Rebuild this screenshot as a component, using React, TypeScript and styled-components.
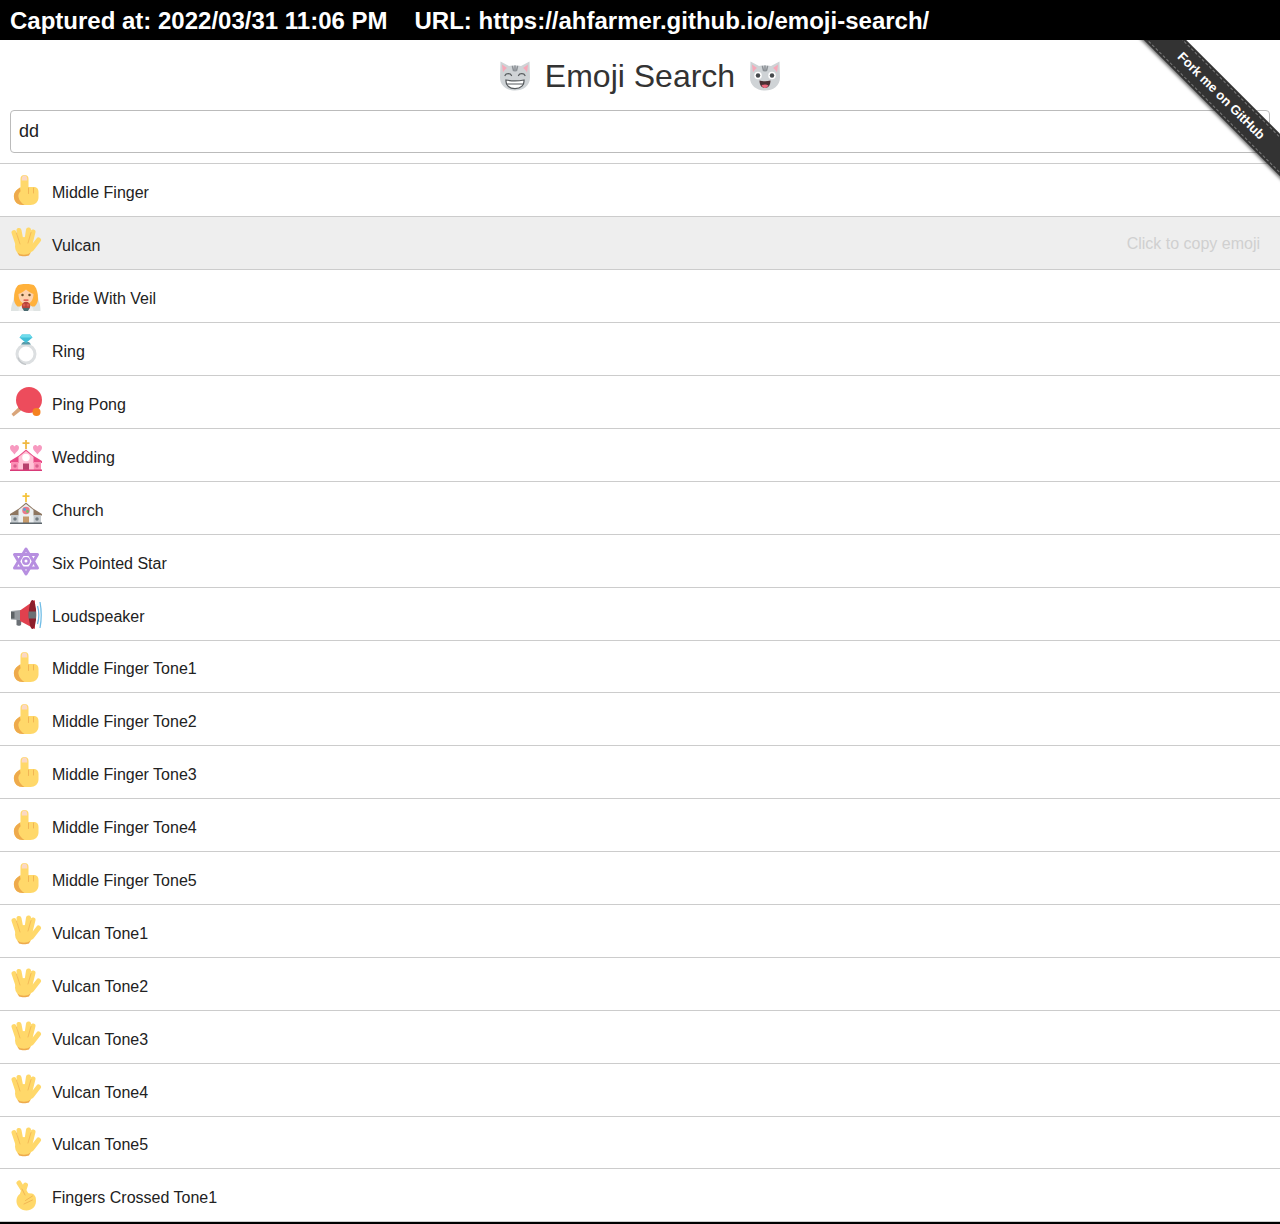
import React from "react";
import styled, { createGlobalStyle } from "styled-components";

const GlobalStyle = createGlobalStyle`
  html, body {
    margin: 0;
    padding: 0;
    background: #fff;
    font-family: "Liberation Sans", Arial, sans-serif;
    color: #333;
  }
`;

// Emoji drawings, all on a 64 box
const Finger = () => (
  <>
    <path d="M8 47c-1-8 3-13 8-17l6-4h28c5 1 7 5 7 10v11c0 9-7 15-16 15H26C15 62 9 56 8 47z" fill="#ffd86a" />
    <path d="M8 47c-1-8 3-13 8-17l4-3 2 7c-4 3-6 8-5 12 1 7 6 12 12 16h-3C15 62 9 56 8 47z" fill="#eeaa4c" />
    <rect x="21" y="2" width="16" height="38" rx="8" fill="#ffd86a" />
    <path d="M23.500 10c0-4 2-7 5.500-7s5.500 3 5.500 7v3h-11z" fill="#fbd8c4" />
    <path d="M37 28v11M47 28v10" stroke="#eeaa4c" strokeWidth="1.500" strokeLinecap="round" />
  </>
);

const Vulcan = () => (
  <>
    <g stroke="#ffd86a" strokeWidth="10" strokeLinecap="round">
      <path d="M8 11l8 24" />
      <path d="M18 7l5 26" />
      <path d="M37 6l-4 26" />
      <path d="M46 10l-6 24" />
      <path d="M57 26L43 44" />
    </g>
    <ellipse cx="28" cy="39" rx="18" ry="19" fill="#ffd86a" />
    <path d="M13 12l7 22M42 11l-6 21" stroke="#eeaa4c" strokeWidth="1.300" strokeLinecap="round" />
    <path d="M15 51c6 6 20 6 26 0l-3 6c-5 2-15 2-20 0z" fill="#eeaa4c" />
  </>
);

const Bride = () => (
  <>
    <path d="M2 62c0-9 2-14 5-22C9 16 18 3 32 3s23 13 25 37c3 8 4 13 4 22z" fill="#dfe4e3" />
    <path d="M8 38C8 14 18 4 32 4s24 10 24 34c0 6-4 13-7 15H15c-3-2-7-9-7-15z" fill="#ffb13b" />
    <path d="M11 12C16 5 24 2 32 2s16 3 21 10c-6-3-14-4-21-4s-15 1-21 4z" fill="#fff" />
    <path d="M17 28c5-1 10-5 15-9 5 4 10 8 15 9 0 13-7 20-15 20s-15-7-15-20z" fill="#fdd1ad" />
    <circle cx="25" cy="30" r="2.500" fill="#664e27" />
    <circle cx="39" cy="30" r="2.500" fill="#664e27" />
    <path d="M28 40h8" stroke="#d83a3a" strokeWidth="2.500" strokeLinecap="round" />
    <path d="M17 62c0-8 7-14 15-14s15 6 15 14z" fill="#eceeee" />
    <circle cx="32" cy="52" r="8.500" fill="#b5443c" />
    <circle cx="28" cy="50" r="3" fill="#d85a4f" />
    <circle cx="36" cy="50" r="3" fill="#d85a4f" />
    <path d="M25 56h14l-3 6h-8z" fill="#4a6a70" />
  </>
);

const Ring = () => (
  <>
    <circle cx="32" cy="42" r="18" fill="none" stroke="#dcdfe1" strokeWidth="6" />
    <path d="M16 49c3 9 9 13 16 14" fill="none" stroke="#c2c6c9" strokeWidth="2.500" />
    <path d="M26 18h12l4 5H22z" fill="#5a9aa8" />
    <path d="M24 3h16l5 6-13 11L19 9z" fill="#42c0d8" />
    <path d="M24 3h16l5 6H19z" fill="#6fdcec" />
  </>
);

const PingPong = () => (
  <>
    <path d="M20 40L3 56l4 5 19-15z" fill="#d9a57a" />
    <path d="M17 38c-1 3 0 6 2 8s5 3 8 2l3-8-8-6z" fill="#8a4b3c" />
    <circle cx="38" cy="28" r="26" fill="#ed4c5c" />
    <circle cx="53" cy="52" r="8" fill="#f58220" />
  </>
);

const Wedding = () => (
  <>
    <path d="M32 2v18M25 8h14" stroke="#f0b840" strokeWidth="3.500" />
    <path d="M9 31C5 25 0 23 0 17c0-6 7-7 9-2 2-5 9-4 9 2 0 6-5 8-9 14zM55 31c-4-6-9-8-9-14 0-6 7-7 9-2 2-5 9-4 9 2 0 6-5 8-9 14z" fill="#f79ac0" />
    <path d="M0 44l18-11 14-12 14 12 18 11v4H0z" fill="#e84a86" />
    <path d="M17 36l15-12 15 12v26H17z" fill="#ffc2d6" />
    <path d="M2 46h15v16H2zM47 46h15v16H47z" fill="#fc8fb5" />
    <path d="M26 49h12v13H26z" fill="#b6406c" />
    <circle cx="32" cy="37" r="7.500" fill="#fff" />
    <circle cx="10" cy="54" r="3.500" fill="#d95c8c" />
    <circle cx="54" cy="54" r="3.500" fill="#d95c8c" />
    <path d="M0 61h64v3H0z" fill="#d83a78" />
  </>
);

const Church = () => (
  <>
    <path d="M32 2v18M25 8h14" stroke="#f5c33b" strokeWidth="3.500" />
    <path d="M0 44l18-11 14-12 14 12 18 11v3H0z" fill="#8e7660" />
    <path d="M17 36l15-12 15 12v26H17z" fill="#eceff1" />
    <path d="M2 46h15v16H2zM47 46h15v16H47z" fill="#c6cbcf" />
    <path d="M26 49h12v13H26z" fill="#c69a6b" />
    <circle cx="32" cy="37" r="7.500" fill="#e97a8a" />
    <circle cx="29" cy="35" r="2.800" fill="#5aa0d8" />
    <circle cx="35" cy="39" r="2.800" fill="#6fc06a" />
    <circle cx="10" cy="54" r="3.500" fill="#717a80" />
    <circle cx="54" cy="54" r="3.500" fill="#717a80" />
    <path d="M0 61h64v3H0z" fill="#5d666c" />
  </>
);

const Star = () => (
  <g fill="none" stroke="#b78fe0" strokeWidth="6" strokeLinejoin="round">
    <path d="M32 8l23 38H9z" />
    <path d="M32 58L9 19h46z" />
    <circle cx="32" cy="32" r="5.500" strokeWidth="5" />
  </g>
);

const Loudspeaker = () => (
  <>
    <path d="M13 42l10 2-1 10c-1 2-7 2-9 0z" fill="#6b7075" />
    <path d="M2 26l20-2v20L2 43z" fill="#94999e" />
    <path d="M2 28h7v13H2z" fill="#5d6266" />
    <path d="M20 25L50 4v58L20 46z" fill="#e0404e" />
    <ellipse cx="45" cy="33" rx="7.500" ry="29" fill="#8c1f2c" />
    <path d="M37 27h15v14H37z" fill="#6b7075" />
    <path d="M55 16c3 10 3 26 0 36M60 8c3 16 3 36 0 52" fill="none" stroke="#6fbce6" strokeWidth="2.500" />
  </>
);

const Crossed = () => (
  <>
    <g stroke="#ffd86a" strokeWidth="10" strokeLinecap="round">
      <path d="M18 8l15 24" />
      <path d="M31 12l-8 24" />
    </g>
    <path d="M13 42c1-9 7-14 15-14l16 1c6 2 8 8 8 15 0 12-9 19-19 19-12 0-21-9-20-21z" fill="#ffd86a" />
    <path d="M24 20l6 12M31 43l14-9M28 50l17-8" stroke="#eeaa4c" strokeWidth="1.500" strokeLinecap="round" fill="none" />
  </>
);

const CatBase = () => (
  <>
    <path d="M3 3l17 9c8-2 16-2 24 0L61 3l1 32c0 17-14 26-30 26S2 52 2 35z" fill="#cfd3d6" />
    <path d="M6 9l10 7c-3 2-6 5-8 9zM58 9l-10 7c3 2 6 5 8 9z" fill="#f7a8b8" />
    <path d="M27 13l2 8M32 12v10M37 13l-2 8" stroke="#8c9196" strokeWidth="3" strokeLinecap="round" />
  </>
);

const CatGrin = () => (
  <>
    <CatBase />
    <path d="M12 31c2-5 11-5 13 0M39 31c2-5 11-5 13 0" fill="none" stroke="#55595c" strokeWidth="2.500" strokeLinecap="round" />
    <path d="M14 40c10 2 26 2 36 0 1 10-6 17-18 17S13 50 14 40z" fill="#fff" stroke="#55595c" strokeWidth="2.500" />
    <path d="M15 48h34" stroke="#55595c" strokeWidth="2" />
  </>
);

const CatOpen = () => (
  <>
    <CatBase />
    <circle cx="18" cy="31" r="7.500" fill="#fff" />
    <circle cx="46" cy="31" r="7.500" fill="#fff" />
    <circle cx="18" cy="31" r="4.500" fill="#45494c" />
    <circle cx="46" cy="31" r="4.500" fill="#45494c" />
    <path d="M21 41c7 2 15 2 22 0 0 9-4 15-11 15s-11-6-11-15z" fill="#4a3034" />
    <path d="M25 51c4-3 10-3 14 0-2 3-4 5-7 5s-5-2-7-5z" fill="#ec6a80" />
  </>
);

const rows: { name: string; icon: React.FC }[] = [
  { name: "Middle Finger", icon: Finger },
  { name: "Vulcan", icon: Vulcan },
  { name: "Bride With Veil", icon: Bride },
  { name: "Ring", icon: Ring },
  { name: "Ping Pong", icon: PingPong },
  { name: "Wedding", icon: Wedding },
  { name: "Church", icon: Church },
  { name: "Six Pointed Star", icon: Star },
  { name: "Loudspeaker", icon: Loudspeaker },
  { name: "Middle Finger Tone1", icon: Finger },
  { name: "Middle Finger Tone2", icon: Finger },
  { name: "Middle Finger Tone3", icon: Finger },
  { name: "Middle Finger Tone4", icon: Finger },
  { name: "Middle Finger Tone5", icon: Finger },
  { name: "Vulcan Tone1", icon: Vulcan },
  { name: "Vulcan Tone2", icon: Vulcan },
  { name: "Vulcan Tone3", icon: Vulcan },
  { name: "Vulcan Tone4", icon: Vulcan },
  { name: "Vulcan Tone5", icon: Vulcan },
  { name: "Fingers Crossed Tone1", icon: Crossed },
];

const App = () => (
  <Page>
    <GlobalStyle />
    <CaptureBar>
      <span>Captured at: 2022/03/31 11:06 PM</span>
      <span>URL: https://ahfarmer.github.io/emoji-search/</span>
    </CaptureBar>
    <Content>
      <Ribbon>
        <RibbonBand>Fork me on GitHub</RibbonBand>
      </Ribbon>
      <Title>
        <TitleEmoji viewBox="0 0 64 64">
          <CatGrin />
        </TitleEmoji>
        Emoji Search
        <TitleEmoji viewBox="0 0 64 64">
          <CatOpen />
        </TitleEmoji>
      </Title>
      <SearchWrap>
        <SearchInput defaultValue="dd" />
      </SearchWrap>
      <List>
        {rows.map((row) => {
          const Icon = row.icon;
          return (
            <Row key={row.name} $hover={row.name === "Vulcan"}>
              <RowEmoji viewBox="0 0 64 64">
                <Icon />
              </RowEmoji>
              <RowName>{row.name}</RowName>
              {row.name === "Vulcan" && <CopyHint>Click to copy emoji</CopyHint>}
            </Row>
          );
        })}
      </List>
    </Content>
    <BottomEdge />
  </Page>
);

export default App;

const Page = styled.div`
  width: 1280px;
  height: 1224px;
  overflow: hidden;
  display: flex;
  flex-direction: column;
`;

const CaptureBar = styled.div`
  height: 40px;
  box-sizing: border-box;
  flex: none;
  background: #000;
  color: #fff;
  font-size: 24px;
  font-weight: 700;
  line-height: 40px;
  padding: 1px 0 0 10px;
  display: flex;
  gap: 27px;
`;

const Content = styled.div`
  position: relative;
  flex: 1;
  min-height: 0;
`;

const Ribbon = styled.div`
  position: absolute;
  top: 0;
  right: 0;
  width: 150px;
  height: 150px;
  overflow: hidden;
  z-index: 2;
`;

const RibbonBand = styled.a`
  position: absolute;
  left: -19px;
  top: 41px;
  width: 220px;
  height: 30px;
  transform: rotate(45deg);
  background: #333;
  box-shadow: 0 2px 3px rgba(0, 0, 0, 0.5);
  color: #fff;
  font-size: 13px;
  font-weight: 700;
  line-height: 30px;
  text-align: center;

  &::before {
    content: "";
    position: absolute;
    left: 0;
    right: 0;
    top: 2px;
    bottom: 2px;
    border-top: 1px dashed rgba(255, 255, 255, 0.35);
    border-bottom: 1px dashed rgba(255, 255, 255, 0.35);
  }
`;

const Title = styled.h1`
  margin: 0;
  height: 70px;
  box-sizing: border-box;
  padding-top: 2px;
  display: flex;
  align-items: center;
  justify-content: center;
  gap: 14px;
  font-size: 32px;
  font-weight: 400;
  color: #333;
`;

const TitleEmoji = styled.svg`
  width: 32px;
  height: 32px;
`;

const SearchWrap = styled.div`
  padding: 0 10px 10px;
`;

const SearchInput = styled.input`
  display: block;
  width: 100%;
  height: 43px;
  box-sizing: border-box;
  padding: 0 8px;
  border: 1px solid #bbb;
  border-radius: 4px;
  font-family: "Liberation Sans", Arial, sans-serif;
  font-size: 18px;
  color: #222;
  outline: none;
`;

const List = styled.div`
  border-top: 1px solid #ccc;
  padding-top: 0.55px;
`;

const Row = styled.div<{ $hover?: boolean }>`
  height: 52.891px;
  box-sizing: border-box;
  display: flex;
  align-items: center;
  padding: 0 20px 0 10px;
  border-bottom: 1px solid #ccc;
  background: ${({ $hover }) => ($hover ? "#eee" : "#fff")};
`;

const RowEmoji = styled.svg`
  width: 32px;
  height: 32px;
  flex: none;
`;

const RowName = styled.span`
  margin-left: 10px;
  padding-top: 5.94px;
  font-size: 16px;
  color: #222;
`;

const CopyHint = styled.span`
  margin-left: auto;
  padding-top: 2px;
  font-size: 16px;
  color: #d0d0d0;
`;

const BottomEdge = styled.div`
  height: 2px;
  flex: none;
  background: #000;
`;
